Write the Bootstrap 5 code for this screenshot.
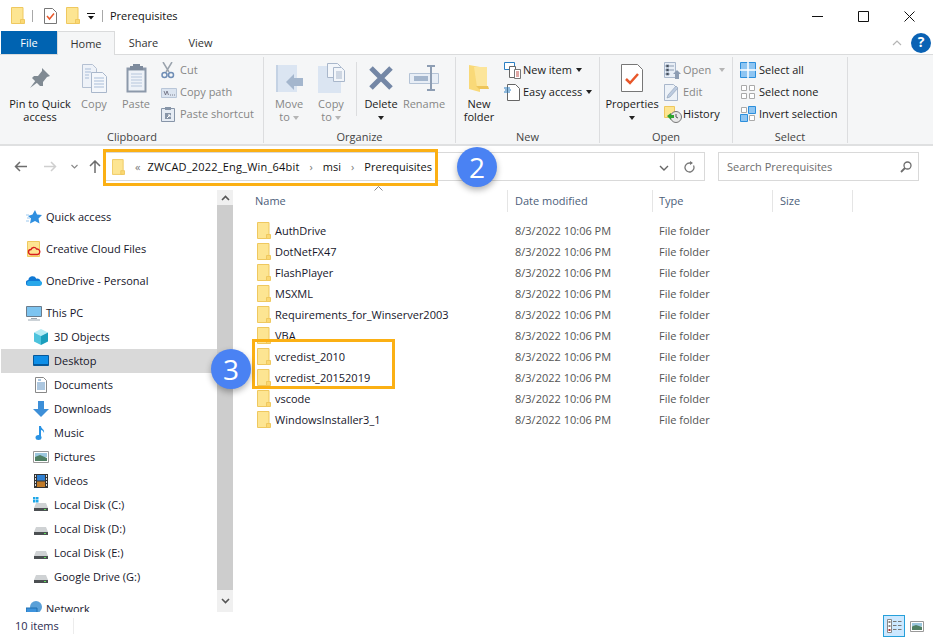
<!DOCTYPE html>
<html lang="en">
<head>
<meta charset="UTF-8">
<title>Prerequisites</title>
<link href="https://cdn.jsdelivr.net/npm/bootstrap@5.3.2/dist/css/bootstrap.min.css" rel="stylesheet">
<style>
  html, body { height: 100%; }
  body { font: 11px/1.2 "Open Sans", sans-serif; color: #1a1a1a; background: #fff; overflow: hidden; }
  .window { position: relative; width: 933px; height: 638px; overflow: hidden; }

  /* title bar */
  .titlebar { height: 31px; padding-left: 11px; }
  .tb-sep { width: 1px; height: 12px; background: #a8a8a8; margin-left: 7px; }
  .tb-prop { margin-left: 11px; }
  .tb-folder { margin-left: 9px; }
  .tb-drop { margin-left: 7px; }
  .tb-title { margin-left: 7px; color: #111; }
  .win-btns { padding-right: 1px; }
  .win-btn { width: 46px; }

  /* tabs */
  .tabs { height: 23px; padding-left: 1px; }
  .tab { height: 23px; width: 57px; color: #333; }
  .tab-file { width: 56px; background: #0063b1; color: #fff; }
  .tab-home { width: 58px; background: #f5f6f7; border: 1px solid #dadbdc; border-bottom: 0; position: relative; z-index: 1; height: 24px; }
  .tab-extra { margin-left: auto; padding-right: 2px; gap: 9px; }
  .help { width: 20px; height: 20px; border-radius: 50%; background: #0a62b4; color: #fff; font-weight: 700; font-size: 14px; }

  /* ribbon */
  .ribbon { height: 92px; background: #f5f6f7; border-top: 1px solid #dadbdc; border-bottom: 2px solid #dfe0e1; padding: 2px 0 0 1px; }
  .rb-group { height: 86px; border-right: 1px solid #dcdddf; }
  .g-clip { width: 263px; } .g-org { width: 192px; } .g-new { width: 144px; } .g-open { width: 133px; } .g-sel { width: 115px; }
  .rb-items { height: 73px; padding-top: 2px; }
  .rb-label { height: 13px; line-height: 14px; text-align: center; color: #444; }
  .rb-big { line-height: 13px; text-align: center; }
  .rb-big .ico { height: 38px; }
  .w-pin { width: 78px; } .w-copy { width: 30px; } .w-paste { width: 40px; margin-left: 7px; }
  .w-move { width: 38px; margin-left: 6px; } .w-copyto { width: 38px; margin-left: 4px; }
  .rb-vsep { width: 1px; height: 54px; margin: 3px 3px 0 6px; background: #dcdddf; }
  .w-del { width: 42px; } .w-ren { width: 44px; }
  .w-newf { width: 40px; margin-left: 3px; } .w-prop { width: 56px; margin-left: 4px; }
  .m-clip { margin-left: 5px; } .m-new { margin-left: 5px; } .m-open { margin-left: 4px; } .m-sel { margin-left: 7px; }
  .rb-row { height: 22px; }
  .rb-row .ico { width: 19px; }
  .off { color: #868686; }
  .caret-d { display: inline-block; border: 3px solid transparent; border-top: 4px solid #222; border-bottom: 0; vertical-align: middle; }
  .caret-off { border-top-color: #b5b5b5; }

  /* address row */
  .addrbar { height: 44px; padding: 6px 0 0 14px; }
  .nav-btns { width: 91px; height: 29px; }
  .nb-fwd { margin-left: 17px; } .nb-down { margin-left: 14px; } .nb-up { margin-left: 11px; }
  .addr { width: 600px; height: 29px; border: 1px solid #d9d9d9; padding-left: 6px; color: #111; }
  .crumb-first { margin: 0 7px 0 10px; color: #777; }
  .crumb-long { letter-spacing: .2px; }
  .crumb-sep { color: #777; margin: 0 10px; }
  .addr-end { margin-left: auto; width: 50px; height: 27px; }
  .addr-refresh { width: 30px; border-left: 1px solid #d9d9d9; }
  .search { width: 201px; height: 29px; margin-left: 13px; border: 1px solid #d9d9d9; padding: 0 6px 0 8px; color: #6d6d6d; }

  /* main panes */
  .panes { height: 422px; }
  .navpane { width: 216px; margin-left: 1px; padding-top: 15px; overflow: hidden; }
  .nav-item { height: 24px; padding-left: 25px; color: #16162a; }
  .nav-item svg { width: 16px; margin-right: 4px; }
  .nav-gap { margin-top: 8px; }
  .nav-sub { padding-left: 32px; }
  .nav-sub svg { margin-right: 5px; }
  .nav-active { background: #d9d9d9; }
  .vscroll { width: 16px; background: #f0f0f0; }
  .vs-btn { height: 15px; }
  .vs-end { height: 22px; }
  .vs-thumb { background: #cdcdcd; }
  .filepane { padding-left: 3px; }
  .fp-inner { height: 100%; }
  .fhead { height: 22px; color: #4c607a; position: relative; margin-left: 1px; }
  .fhead > div { height: 100%; padding-top: 4px; }
  .sort-caret { position: absolute; left: 137px; top: -4px; }
  .c-name { width: 271px; padding-left: 18px; border-right: 1px solid #e5e5e5; }
  .c-date { width: 145px; padding-left: 7px; border-right: 1px solid #e5e5e5; }
  .c-type { width: 120px; padding-left: 6px; border-right: 1px solid #e5e5e5; }
  .c-size { width: 80px; padding-left: 7px; border-right: 1px solid #e5e5e5; }
  .flist { padding-top: 8px; margin-left: 1px; }
  .frow { height: 21px; color: #16162a; }
  .frow .c-name { border: 0; padding-left: 20px; display: flex; align-items: center; gap: 4px; }
  .frow .c-date, .frow .c-type { border: 0; color: #545454; }

  /* status bar */
  .statusbar { height: 26px; padding: 2px 0 0 15px; color: #2b2b50; }
  .st-sep { width: 1px; height: 16px; background: #ececec; margin-left: 14px; }
  .st-views { margin-left: auto; padding-right: 7px; gap: 3px; }
  .st-view { width: 22px; height: 22px; }
  .st-view.on { border: 1.5px solid #26a0da; background: #cce8ff; }
  .st-view.plain { width: 18px; }

  /* tutorial annotations, drawn over the screenshot */
  .callout { position: absolute; border: 3px solid #fbb014; pointer-events: none; }
  .callout-addr { left: 103px; top: 149px; width: 335px; height: 37px; }
  .callout-rows { left: 252px; top: 339px; width: 143px; height: 50px; }
  .badge-num { position: absolute; width: 40px; height: 40px; border-radius: 50%; background: #4a82f3; color: #fff;
    font: 28px/40px "Open Sans", sans-serif; text-align: center; box-shadow: 0 3px 6px rgba(0,0,0,.3); }
  .num-2 { left: 457px; top: 147px; }
  .num-3 { left: 211px; top: 349px; }
</style>
</head>
<body>

<svg width="0" height="0" class="position-absolute">
  <symbol id="folder" viewBox="0 0 14 17">
    <path d="M.5.5h11.5v16H.5z" fill="#fde592" stroke="#efc85f"/>
    <path d="M9.5 12.5h4v4h-4z" fill="#fbd873" stroke="#efc85f"/>
  </symbol>
  <symbol id="disk" viewBox="0 0 16 16">
    <path d="M3 6h10l2 5H1z" fill="#cfd2d4"/>
    <path d="M1 11h14v3H1z" fill="#4b4f52"/>
    <path d="M11 12h2v1h-2z" fill="#5fe05a"/>
  </symbol>
</svg>

<div class="window">

  <!-- title bar -->
  <div class="titlebar d-flex align-items-center">
    <svg width="14" height="17"><use href="#folder"/></svg>
    <div class="tb-sep"></div>
    <svg class="tb-prop" width="13" height="16" viewBox="0 0 13 16"><path d="M.5.500h8l4 4v11H.5z" fill="#fff" stroke="#777"/><path d="M3 8l2.500 3L10 5.500" fill="none" stroke="#e8572a" stroke-width="1.500"/></svg>
    <svg class="tb-folder" width="14" height="17"><use href="#folder"/></svg>
    <svg class="tb-drop" width="8" height="8" viewBox="0 0 8 8"><path d="M0 1h8v1H0zM1 4h6L4 7.500z" fill="#111"/></svg>
    <div class="tb-sep"></div>
    <div class="tb-title">Prerequisites</div>
    <div class="win-btns ms-auto d-flex">
      <div class="win-btn text-center"><svg width="11" height="11" viewBox="0 0 11 11"><path d="M0 5.500h11" stroke="#111"/></svg></div>
      <div class="win-btn text-center"><svg width="11" height="11" viewBox="0 0 11 11"><path d="M.5.500h10v10H.5z" fill="none" stroke="#111"/></svg></div>
      <div class="win-btn text-center"><svg width="11" height="11" viewBox="0 0 11 11"><path d="M.5.500l10 10M10.500.500l-10 10" stroke="#111"/></svg></div>
    </div>
  </div>

  <!-- tabs -->
  <div class="tabs d-flex">
    <div class="tab tab-file d-flex align-items-center justify-content-center">File</div>
    <div class="tab tab-home d-flex align-items-center justify-content-center">Home</div>
    <div class="tab d-flex align-items-center justify-content-center">Share</div>
    <div class="tab d-flex align-items-center justify-content-center">View</div>
    <div class="tab-extra d-flex align-items-center">
      <svg width="10" height="6" viewBox="0 0 10 6"><path d="M1 5l4-4 4 4" fill="none" stroke="#b5b5b5" stroke-width="1.200"/></svg>
      <div class="help d-flex align-items-center justify-content-center">?</div>
    </div>
  </div>

  <!-- ribbon -->
  <div class="ribbon d-flex">
    <div class="rb-group g-clip d-flex flex-column">
      <div class="rb-items d-flex">
        <div class="rb-big w-pin">
          <div class="ico d-flex align-items-center justify-content-center">
            <svg width="22" height="22" viewBox="0 0 22 22"><path d="M13 1l8 8-3 1-4 5 0 4-3 0-8-8 2-2 4 0 4-5z" fill="#808a93"/><path d="M7 13l-6 8 8-6z" fill="#808a93"/></svg>
          </div>
          Pin to Quick<br>access
        </div>
        <div class="rb-big w-copy off">
          <div class="ico d-flex align-items-center justify-content-center">
            <svg width="25" height="29" viewBox="0 0 25 29"><path d="M.5.500h10l4 4v19H.5z" fill="#eef2f8" stroke="#b4c0d2"/><path d="M9.500 8.500h11l4 4v16h-15z" fill="#f4f7fb" stroke="#a9b7cb"/><path d="M12 14h10M12 17h10M12 20h10M12 23h10M3 5h6M3 8h6M3 11h4M3 14h4" stroke="#a9bdd8"/></svg>
          </div>
          Copy
        </div>
        <div class="rb-big w-paste off">
          <div class="ico d-flex align-items-center justify-content-center">
            <svg width="21" height="30" viewBox="0 0 21 30"><path d="M.5 4.500h20v25H.5z" fill="#8c99aa"/><path d="M2.500 7.500h16v20h-16z" fill="#eef2f8"/><path d="M7 1h7v2h3v4H4V3h3z" fill="#7e8b9d"/><path d="M5 11h11M5 14h11M5 17h11M5 20h11M5 23h11" stroke="#b6c6dc"/></svg>
          </div>
          Paste
        </div>
        <div class="m-clip">
          <div class="rb-row d-flex align-items-center off">
            <span class="ico"><svg width="14" height="17" viewBox="0 0 14 17"><path d="M2 0l6 10M11 0L5 10" stroke="#9aa3ad" stroke-width="1.500"/><circle cx="3.500" cy="13" r="2.500" fill="none" stroke="#6f8db5" stroke-width="1.500"/><circle cx="10" cy="13" r="2.500" fill="none" stroke="#6f8db5" stroke-width="1.500"/></svg></span>Cut
          </div>
          <div class="rb-row d-flex align-items-center off">
            <span class="ico"><svg width="16" height="10" viewBox="0 0 16 10"><path d="M.5.500h15v9H.5z" fill="#dbe4f0" stroke="#b9c6d8"/><path d="M3 3l1.500 4L6 3l1.500 4M9 7h1M11 7h1M13 7h1" fill="none" stroke="#667" stroke-width=".8"/></svg></span>Copy path
          </div>
          <div class="rb-row d-flex align-items-center off">
            <span class="ico"><svg width="14" height="16" viewBox="0 0 14 16"><path d="M.5 2.500h13v13H.5z" fill="#e6ecf4" stroke="#8795a8"/><path d="M4 1h6v3H4z" fill="#8795a8"/><path d="M4 7h6v6H4z" fill="#8795a8"/><path d="M6 12l3-3M7 9h2v2" stroke="#fff" fill="none"/></svg></span>Paste shortcut
          </div>
        </div>
      </div>
      <div class="rb-label">Clipboard</div>
    </div>

    <div class="rb-group g-org d-flex flex-column">
      <div class="rb-items d-flex">
        <div class="rb-big w-move off">
          <div class="ico d-flex align-items-center justify-content-center">
            <svg width="27" height="29" viewBox="0 0 27 29"><path d="M0 1h21v27H0z" fill="#dbe5f2"/><path d="M0 1h2v27H0z" fill="#c4d2e4"/><path d="M10 18l8-8v4h9v8h-9v4z" fill="#a4b6cd"/></svg>
          </div>
          Move<br>to <span class="caret-d caret-off"></span>
        </div>
        <div class="rb-big w-copyto off">
          <div class="ico d-flex align-items-center justify-content-center">
            <svg width="27" height="31" viewBox="0 0 27 31"><path d="M0 3h23v27H0z" fill="#dbe5f2"/><path d="M9.500.500h10l3 3v11h-13z" fill="#f3f6fa" stroke="#a9b7cb"/><path d="M15.500 4.500h8l3 3v11h-11z" fill="#f3f6fa" stroke="#a9b7cb"/><path d="M18 9h6M18 11h6M18 13h6M18 15h6" stroke="#a9b7cb"/></svg>
          </div>
          Copy<br>to <span class="caret-d caret-off"></span>
        </div>
        <div class="rb-vsep"></div>
        <div class="rb-big w-del">
          <div class="ico d-flex align-items-center justify-content-center">
            <svg width="26" height="26" viewBox="0 0 26 26"><path d="M3 3l20 20M23 3L3 23" stroke="#7487a6" stroke-width="5"/></svg>
          </div>
          Delete<br><span class="caret-d"></span>
        </div>
        <div class="rb-big w-ren off">
          <div class="ico d-flex align-items-center justify-content-center">
            <svg width="30" height="26" viewBox="0 0 30 26"><path d="M.5 8.500h29v10H.5z" fill="#e8eef6" stroke="#b4c3d6"/><path d="M5 11h14v5H5z" fill="#a4b6cd"/><path d="M18 1h8M18 25h8M22 1v24" stroke="#8d9db3" stroke-width="2"/></svg>
          </div>
          Rename
        </div>
      </div>
      <div class="rb-label">Organize</div>
    </div>

    <div class="rb-group g-new d-flex flex-column">
      <div class="rb-items d-flex">
        <div class="rb-big w-newf">
          <div class="ico d-flex align-items-center justify-content-center">
            <svg width="20" height="28" viewBox="0 0 20 28"><path d="M0 1l11 2v25L0 25z" fill="#f9d978"/><path d="M5 3h13v20H8z" fill="#fce59a"/><path d="M7 22h12l1 3H10z" fill="#eec55a"/></svg>
          </div>
          New<br>folder
        </div>
        <div class="m-new">
          <div class="rb-row d-flex align-items-center">
            <span class="ico"><svg width="17" height="17" viewBox="0 0 17 17"><path d="M.5.500h10v7H.5z" fill="#fff" stroke="#2b7fc3"/><path d="M5.500 4.500h6v11h-6z" fill="#fff" stroke="#666"/><path d="M10.500 7.500h6v9h-6z" fill="#fff" stroke="#777"/><path d="M12 10h3M12 12h3M12 14h3" stroke="#c0504d"/></svg></span>New item<span class="caret-d ms-1"></span>
          </div>
          <div class="rb-row d-flex align-items-center">
            <span class="ico"><svg width="16" height="17" viewBox="0 0 16 17"><path d="M3.500.500h8l4 4v12h-12z" fill="#fff" stroke="#666"/><path d="M0 4h6M1 6h6M0 8h6" stroke="#2b7fc3"/></svg></span>Easy access<span class="caret-d ms-1"></span>
          </div>
        </div>
      </div>
      <div class="rb-label">New</div>
    </div>

    <div class="rb-group g-open d-flex flex-column">
      <div class="rb-items d-flex">
        <div class="rb-big w-prop">
          <div class="ico d-flex align-items-center justify-content-center">
            <svg width="22" height="29" viewBox="0 0 22 29"><path d="M.5.500h16l5 5v22H.5z" fill="#fff" stroke="#777"/><path d="M5 15l4 4 8-9" fill="none" stroke="#e8572a" stroke-width="2.500"/></svg>
          </div>
          Properties<br><span class="caret-d"></span>
        </div>
        <div class="m-open">
          <div class="rb-row d-flex align-items-center off">
            <span class="ico"><svg width="17" height="17" viewBox="0 0 17 17"><path d="M.5.500h11v15H.5z" fill="#e8eef6" stroke="#a9b7cb"/><path d="M2 3h3v2H2zM2 7h3v2H2zM2 11h3v2H2zM6 4h4M6 8h4" stroke="#8d9db3"/><path d="M9 12l4-4 4 4h-2v5h-4v-5z" fill="#8d9db3"/></svg></span>Open<span class="caret-d caret-off ms-2"></span>
          </div>
          <div class="rb-row d-flex align-items-center off">
            <span class="ico"><svg width="15" height="17" viewBox="0 0 15 17"><path d="M.5.500h9l4 4v12H.5z" fill="#edf2f8" stroke="#a9b7cb"/><path d="M3 14l1-3 8-9 2 2-8 9z" fill="#bccbe0" stroke="#8d9db3" stroke-width=".6"/></svg></span>Edit
          </div>
          <div class="rb-row d-flex align-items-center">
            <span class="ico"><svg width="18" height="17" viewBox="0 0 18 17"><path d="M.5.500h10v11H.5z" fill="#fde592" stroke="#efc85f"/><circle cx="12" cy="11" r="5.500" fill="#e8e8e8" stroke="#777"/><path d="M12 8v3l2 1" fill="none" stroke="#555"/><path d="M3 10l4-3v2h3v3H7v2z" fill="#2fa32f"/></svg></span>History
          </div>
        </div>
      </div>
      <div class="rb-label">Open</div>
    </div>

    <div class="rb-group g-sel d-flex flex-column">
      <div class="rb-items d-flex">
        <div class="m-sel">
          <div class="rb-row d-flex align-items-center">
            <span class="ico"><svg width="16" height="16" viewBox="0 0 16 16"><path d="M.5.500h15v15H.5z" fill="#8ec5f2" stroke="#2c8fdc"/><path d="M8 0v16M0 8h16" stroke="#fff" stroke-width="1.500"/></svg></span>Select all
          </div>
          <div class="rb-row d-flex align-items-center">
            <span class="ico"><svg width="16" height="16" viewBox="0 0 16 16"><path d="M1.500 1.500h5v5h-5zM9.500 1.500h5v5h-5zM1.500 9.500h5v5h-5zM9.500 9.500h5v5h-5z" fill="#fff" stroke="#aaa"/></svg></span>Select none
          </div>
          <div class="rb-row d-flex align-items-center">
            <span class="ico"><svg width="16" height="16" viewBox="0 0 16 16"><path d="M1.500 1.500h5v5h-5zM9.500 9.500h5v5h-5z" fill="#fff" stroke="#aaa"/><path d="M8.500.500h7v7h-7zM.500 8.500h7v7h-7z" fill="#8ec5f2" stroke="#2c8fdc"/></svg></span>Invert selection
          </div>
        </div>
      </div>
      <div class="rb-label">Select</div>
    </div>
  </div>

  <!-- address row -->
  <div class="addrbar d-flex">
    <div class="nav-btns d-flex align-items-center">
      <svg width="13" height="11" viewBox="0 0 13 11"><path d="M6 1L1.500 5.500 6 10M2 5.500h11" fill="none" stroke="#6d6d6d" stroke-width="1.500"/></svg>
      <svg class="nb-fwd" width="13" height="11" viewBox="0 0 13 11"><path d="M7 1l4.500 4.500L7 10M11 5.500H0" fill="none" stroke="#cfcfcf" stroke-width="1.500"/></svg>
      <svg class="nb-down" width="7" height="5" viewBox="0 0 7 5"><path d="M.5 1l3 3 3-3" fill="none" stroke="#8a8a8a" stroke-width="1.200"/></svg>
      <svg class="nb-up" width="12" height="13" viewBox="0 0 12 13"><path d="M1 6l5-5 5 5M6 1.500V13" fill="none" stroke="#6d6d6d" stroke-width="1.500"/></svg>
    </div>
    <div class="addr d-flex align-items-center">
      <svg width="13" height="16"><use href="#folder"/></svg>
      <span class="crumb-first">&laquo;</span>
      <span class="crumb-long">ZWCAD_2022_Eng_Win_64bit</span>
      <span class="crumb-sep">&rsaquo;</span>
      <span>msi</span>
      <span class="crumb-sep">&rsaquo;</span>
      <span>Prerequisites</span>
      <div class="addr-end d-flex align-items-center">
        <div class="flex-fill text-center"><svg width="10" height="6" viewBox="0 0 10 6"><path d="M1 1l4 4 4-4" fill="none" stroke="#666" stroke-width="1.400"/></svg></div>
        <div class="addr-refresh h-100 d-flex align-items-center justify-content-center"><svg width="11" height="12" viewBox="0 0 11 12"><path d="M9.500 4.500A4.500 4.500 0 1 1 5.500 2H8" fill="none" stroke="#777" stroke-width="1.300"/><path d="M6 0l3 2-3 2z" fill="#777"/></svg></div>
      </div>
    </div>
    <div class="search d-flex align-items-center justify-content-between">
      <span>Search Prerequisites</span>
      <svg width="12" height="12" viewBox="0 0 12 12"><circle cx="7.500" cy="4.500" r="3.500" fill="none" stroke="#6d6d6d" stroke-width="1.300"/><path d="M5 7l-4 4" stroke="#6d6d6d" stroke-width="1.800"/></svg>
    </div>
  </div>

  <!-- navigation + file list -->
  <div class="panes d-flex">
    <div class="navpane">
      <div class="nav-item d-flex align-items-center"><svg height="16" viewBox="0 0 16 16"><path d="M9 1l2 4.500 5 .5-3.500 3.500 1 5L9 12l-5 2.500 1-5L2 7l4.500-1.500z" fill="#2f8fe0"/><path d="M0 6h3M1 9h3M0 12h3" stroke="#9cc9ef"/></svg>Quick access</div>
      <div class="nav-item nav-gap d-flex align-items-center"><svg height="16" viewBox="0 0 14 16"><path d="M.5.500h12v15H.5z" fill="#fde592" stroke="#efc85f"/><path d="M4 13.500a2.500 2.500 0 0 1 0-5 3 3 0 0 1 5.500-.5 2.500 2.500 0 0 1 1 5.500z" fill="#fde592" stroke="#d81e1e" stroke-width="1.400"/></svg>Creative Cloud Files</div>
      <div class="nav-item nav-gap d-flex align-items-center"><svg height="16" viewBox="0 0 17 16"><path d="M3 13a3 3 0 0 1-.5-6 4.500 4.500 0 0 1 8.500-1.500 3.500 3.500 0 0 1 4.500 3A2.500 2.500 0 0 1 14 13z" fill="#0f78d4"/><path d="M3 13a2.500 2.500 0 0 1 1-5h11a2.500 2.500 0 0 1-1 5z" fill="#28a8ea"/></svg>OneDrive - Personal</div>
      <div class="nav-item nav-gap d-flex align-items-center"><svg height="16" viewBox="0 0 16 16"><path d="M.5 1.500h15v10H.5z" fill="#7dc4f0" stroke="#6b7c8c"/><path d="M5 13h6v1H5zM2 14.500h12v1H2z" fill="#9aa6b0"/></svg>This PC</div>
      <div class="nav-item nav-sub d-flex align-items-center"><svg height="16" viewBox="0 0 16 16"><path d="M8 0l7 3.500L8 7 1 3.500z" fill="#b6ecf5"/><path d="M1 3.500L8 7v9l-7-3.500z" fill="#4dc3dd"/><path d="M15 3.500L8 7v9l7-3.500z" fill="#1b9fbd"/></svg>3D Objects</div>
      <div class="nav-item nav-sub nav-active d-flex align-items-center"><svg height="16" viewBox="0 0 16 16"><path d="M.5 2.500h15v10H.5z" fill="#0e8fe8" stroke="#06589a"/><path d="M1 11h14v1.500H1z" fill="#06589a"/></svg>Desktop</div>
      <div class="nav-item nav-sub d-flex align-items-center"><svg height="16" viewBox="0 0 16 16"><path d="M2.500.500h8l3 3v12h-11z" fill="#fff" stroke="#888"/><path d="M5 3h3M4 6h8M4 8h8M4 10h8M4 12h8" stroke="#5a8fc0"/></svg>Documents</div>
      <div class="nav-item nav-sub d-flex align-items-center"><svg height="16" viewBox="0 0 16 16"><path d="M5 0h6v8h5l-8 8-8-8h5z" fill="#3d8fd8"/></svg>Downloads</div>
      <div class="nav-item nav-sub d-flex align-items-center"><svg height="16" viewBox="0 0 16 16"><path d="M7 1v11" stroke="#2a93e4" stroke-width="2"/><ellipse cx="5.500" cy="12.500" rx="3" ry="2.500" fill="#2a93e4"/><path d="M8 1c0 3 4 3 3 7-.5-2-2-3-3-3z" fill="#2a93e4"/></svg>Music</div>
      <div class="nav-item nav-sub d-flex align-items-center"><svg height="16" viewBox="0 0 16 16"><path d="M.5 2.500h15v11H.5z" fill="#fff" stroke="#999"/><path d="M2 4h12v4H2z" fill="#9cc7de"/><path d="M2 8l5-2 7 3v3H2z" fill="#4f7f63"/></svg>Pictures</div>
      <div class="nav-item nav-sub d-flex align-items-center"><svg height="16" viewBox="0 0 16 16"><path d="M1 1h14v14H1z" fill="#333"/><path d="M4 2h8v5.500H4z" fill="#2f7fd0"/><path d="M4 8.500h8V14H4z" fill="#c07a28"/><path d="M2 2h1v2H2zM2 5h1v2H2zM2 8h1v2H2zM2 11h1v2H2zM13 2h1v2h-1zM13 5h1v2h-1zM13 8h1v2h-1zM13 11h1v2h-1z" fill="#ddd"/></svg>Videos</div>
      <div class="nav-item nav-sub d-flex align-items-center"><svg height="16" viewBox="0 0 16 16"><use href="#disk"/><path d="M0 0h2.500v2.500H0zM3 0h2.500v2.500H3zM0 3h2.500v2.500H0zM3 3h2.500v2.500H3z" fill="#1fa7e8"/></svg>Local Disk (C:)</div>
      <div class="nav-item nav-sub d-flex align-items-center"><svg height="16" viewBox="0 0 16 16"><use href="#disk"/></svg>Local Disk (D:)</div>
      <div class="nav-item nav-sub d-flex align-items-center"><svg height="16" viewBox="0 0 16 16"><use href="#disk"/></svg>Local Disk (E:)</div>
      <div class="nav-item nav-sub d-flex align-items-center"><svg height="16" viewBox="0 0 16 16"><use href="#disk"/></svg>Google Drive (G:)</div>
      <div class="nav-item nav-gap d-flex align-items-center"><svg height="16" viewBox="0 0 16 16"><circle cx="10" cy="6" r="6" fill="#5aa0d8"/><path d="M0 7h11v8H0z" fill="#3d93dd" stroke="#1f6fb0"/></svg>Network</div>
    </div>

    <div class="vscroll d-flex flex-column">
      <div class="vs-btn d-flex align-items-center justify-content-center"><svg width="9" height="6" viewBox="0 0 9 6"><path d="M1 5l3.500-3.500L8 5" fill="none" stroke="#555" stroke-width="1.600"/></svg></div>
      <div class="vs-thumb flex-fill"></div>
      <div class="vs-end d-flex align-items-center justify-content-center"><svg width="9" height="6" viewBox="0 0 9 6"><path d="M1 1l3.500 3.500L8 1" fill="none" stroke="#555" stroke-width="1.600"/></svg></div>
    </div>

    <div class="filepane flex-fill">
      <div class="fp-inner">
        <div class="fhead d-flex">
          <svg class="sort-caret" width="9" height="5" viewBox="0 0 9 5"><path d="M.5 4.500l4-4 4 4" fill="none" stroke="#888"/></svg>
          <div class="c-name">Name</div>
          <div class="c-date">Date modified</div>
          <div class="c-type">Type</div>
          <div class="c-size">Size</div>
        </div>
        <div class="flist">
          <div class="frow d-flex align-items-center"><div class="c-name"><svg width="14" height="17"><use href="#folder"/></svg>AuthDrive</div><div class="c-date">8/3/2022 10:06 PM</div><div class="c-type">File folder</div></div>
          <div class="frow d-flex align-items-center"><div class="c-name"><svg width="14" height="17"><use href="#folder"/></svg>DotNetFX47</div><div class="c-date">8/3/2022 10:06 PM</div><div class="c-type">File folder</div></div>
          <div class="frow d-flex align-items-center"><div class="c-name"><svg width="14" height="17"><use href="#folder"/></svg>FlashPlayer</div><div class="c-date">8/3/2022 10:06 PM</div><div class="c-type">File folder</div></div>
          <div class="frow d-flex align-items-center"><div class="c-name"><svg width="14" height="17"><use href="#folder"/></svg>MSXML</div><div class="c-date">8/3/2022 10:06 PM</div><div class="c-type">File folder</div></div>
          <div class="frow d-flex align-items-center"><div class="c-name"><svg width="14" height="17"><use href="#folder"/></svg>Requirements_for_Winserver2003</div><div class="c-date">8/3/2022 10:06 PM</div><div class="c-type">File folder</div></div>
          <div class="frow d-flex align-items-center"><div class="c-name"><svg width="14" height="17"><use href="#folder"/></svg>VBA</div><div class="c-date">8/3/2022 10:06 PM</div><div class="c-type">File folder</div></div>
          <div class="frow d-flex align-items-center"><div class="c-name"><svg width="14" height="17"><use href="#folder"/></svg>vcredist_2010</div><div class="c-date">8/3/2022 10:06 PM</div><div class="c-type">File folder</div></div>
          <div class="frow d-flex align-items-center"><div class="c-name"><svg width="14" height="17"><use href="#folder"/></svg>vcredist_20152019</div><div class="c-date">8/3/2022 10:06 PM</div><div class="c-type">File folder</div></div>
          <div class="frow d-flex align-items-center"><div class="c-name"><svg width="14" height="17"><use href="#folder"/></svg>vscode</div><div class="c-date">8/3/2022 10:06 PM</div><div class="c-type">File folder</div></div>
          <div class="frow d-flex align-items-center"><div class="c-name"><svg width="14" height="17"><use href="#folder"/></svg>WindowsInstaller3_1</div><div class="c-date">8/3/2022 10:06 PM</div><div class="c-type">File folder</div></div>
        </div>
      </div>
    </div>
  </div>

  <!-- status bar -->
  <div class="statusbar d-flex align-items-center">
    <span>10 items</span>
    <div class="st-sep"></div>
    <div class="st-views d-flex align-items-center">
      <div class="st-view on d-flex align-items-center justify-content-center"><svg width="15" height="14" viewBox="0 0 15 14"><path d="M.5.500h4v13h-4z" fill="#fff" stroke="#888"/><path d="M1.500 2h2v2h-2zM1.500 6h2v2h-2z" fill="#888"/><path d="M1.500 10h2v2h-2z" fill="#b03030"/><path d="M6 2.500h3.500M11 2.500h3.500M6 6.500h3.500M11 6.500h3.500M6 10.500h3.500M11 10.500h3.500" stroke="#777"/></svg></div>
      <div class="st-view plain d-flex align-items-center justify-content-center"><svg width="14" height="11" viewBox="0 0 14 11"><path d="M.5.500h13v10H.5z" fill="#fff" stroke="#999"/><path d="M2 2h10v3.500H2z" fill="#9cc7de"/><path d="M2 5.500l4-1.500 6 2v3H2z" fill="#4f7f63"/></svg></div>
    </div>
  </div>

  <!-- annotations -->
  <div class="callout callout-addr"></div>
  <div class="callout callout-rows"></div>
  <div class="badge-num num-2">2</div>
  <div class="badge-num num-3">3</div>
</div>

<script src="https://cdn.jsdelivr.net/npm/bootstrap@5.3.2/dist/js/bootstrap.bundle.min.js"></script>
</body>
</html>
